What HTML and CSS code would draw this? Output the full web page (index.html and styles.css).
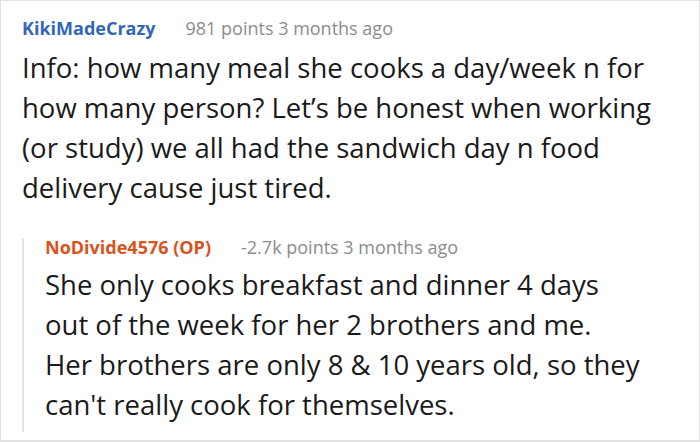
FILE: index.html
```html
<!DOCTYPE html>
<html>
<head>
<meta charset="utf-8">
<link rel="stylesheet" href="styles.css">
</head>
<body>
<div class="frame">
  <div class="comment">
    <div class="head">
      <span class="user user-blue">KikiMadeCrazy</span>
      <span class="meta">981 points 3 months ago</span>
    </div>
    <p class="body">Info: how many meal she cooks a day/week n for how many person? Let’s be honest when working (or study) we all had the sandwich day n food delivery cause just tired.</p>
    <div class="reply">
      <div class="head head-reply">
        <span class="user user-orange">NoDivide4576 (OP)</span>
        <span class="meta">-2.7k points 3 months ago</span>
      </div>
      <p class="body body-reply">She only cooks breakfast and dinner 4 days out of the week for her 2 brothers and me. Her brothers are only 8 &amp; 10 years old, so they can't really cook for themselves.</p>
    </div>
  </div>
</div>
</body>
</html>
```
FILE: styles.css
```css
html, body {
  margin: 0;
  padding: 0;
  background: #ffffff;
}
.frame {
  width: 700px;
  height: 442px;
  box-sizing: border-box;
  border: 1px solid #e2e2e2;
  border-bottom-width: 2px;
  overflow: hidden;
  font-family: "Open Sans", "Liberation Sans", sans-serif;
}
.comment {
  padding: 15px 10px 0 21px;
}
.head {
  display: flex;
  gap: 30px;
  align-items: baseline;
  font-size: 18px;
  line-height: 24px;
}
.head-reply {
  line-height: 18px;
}
.user {
  font-weight: 700;
}
.user-blue { color: #3466b8; }
.user-orange { color: #d9531e; }
.meta {
  color: #8c8c8c;
}
.body {
  margin: 8px 0 0 0;
  font-size: 27.5px;
  line-height: 40px;
  color: #1a1a1a;
}
.body-reply {
  margin-top: 9px;
}
.reply {
  margin-top: 30px;
  margin-right: 44px;
  border-left: 2px solid #e4e4e4;
  padding: 0 0 7px 21px;
}
```
